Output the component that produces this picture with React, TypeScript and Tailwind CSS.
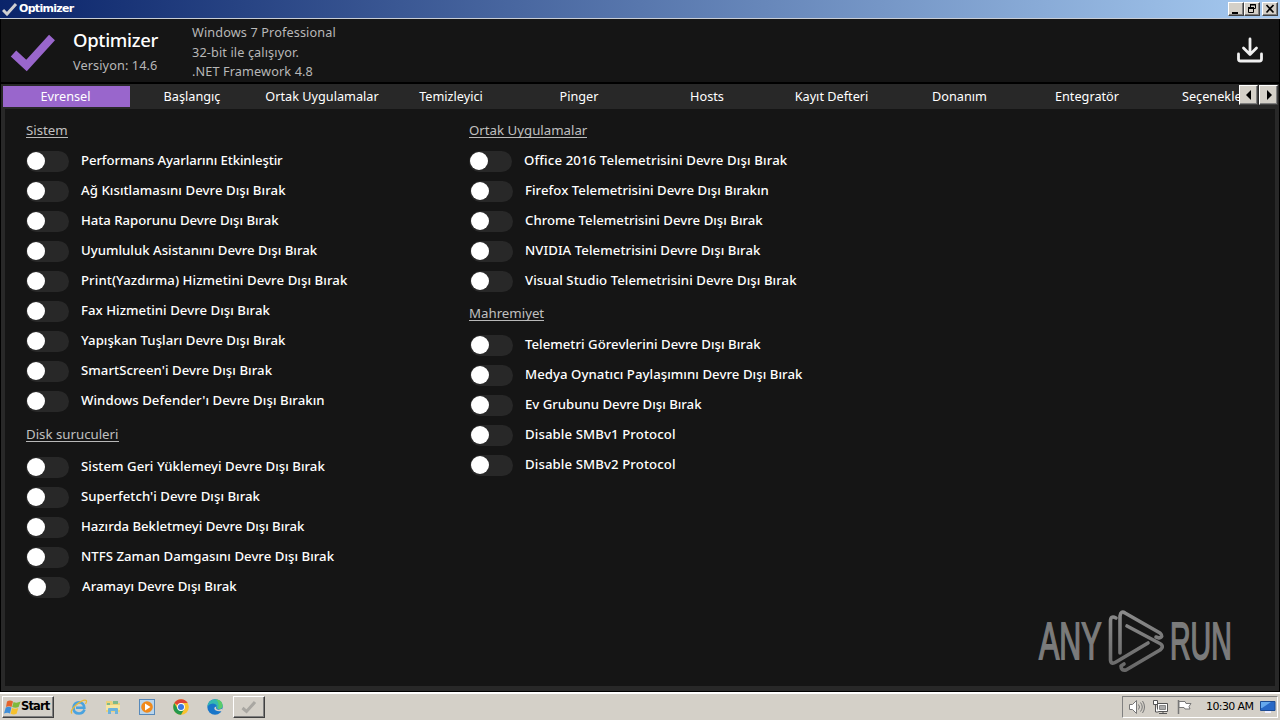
import { useId } from "react";

type Item = { label: string; track?: string; shift?: string };

const system: Item[] = [
  { label: "Performans Ayarlarını Etkinleştir", track: "tracking-[-0.11px]" },
  { label: "Ağ Kısıtlamasını Devre Dışı Bırak", track: "tracking-[0.055px]" },
  { label: "Hata Raporunu Devre Dışı Bırak", track: "tracking-[-0.03px]" },
  { label: "Uyumluluk Asistanını Devre Dışı Bırak", track: "tracking-[0.01px]" },
  { label: "Print(Yazdırma) Hizmetini Devre Dışı Bırak", track: "tracking-[0.075px]" },
  { label: "Fax Hizmetini Devre Dışı Bırak", track: "tracking-[0.03px]" },
  { label: "Yapışkan Tuşları Devre Dışı Bırak", track: "tracking-[0.025px]" },
  { label: "SmartScreen'i Devre Dışı Bırak", track: "tracking-[0.05px]" },
  { label: "Windows Defender'ı Devre Dışı Bırakın", track: "tracking-[0.06px]" },
];
const disk: Item[] = [
  { label: "Sistem Geri Yüklemeyi Devre Dışı Bırak", track: "tracking-[0.035px]" },
  { label: "Superfetch'i Devre Dışı Bırak", track: "tracking-[0.03px]" },
  { label: "Hazırda Bekletmeyi Devre Dışı Bırak", track: "tracking-[-0.03px]" },
  { label: "NTFS Zaman Damgasını Devre Dışı Bırak", track: "tracking-[0.03px]" },
  { label: "Aramayı Devre Dışı Bırak", track: "tracking-[0px]", shift: "ml-px" },
];
const apps: Item[] = [
  { label: "Office 2016 Telemetrisini Devre Dışı Bırak", track: "tracking-[0.12px]", shift: "-ml-px" },
  { label: "Firefox Telemetrisini Devre Dışı Bırakın", track: "tracking-[0.04px]" },
  { label: "Chrome Telemetrisini Devre Dışı Bırak", track: "tracking-[0.01px]" },
  { label: "NVIDIA Telemetrisini Devre Dışı Bırak", track: "tracking-[0.06px]" },
  { label: "Visual Studio Telemetrisini Devre Dışı Bırak", track: "tracking-[0.07px]" },
];
const privacy: Item[] = [
  { label: "Telemetri Görevlerini Devre Dışı Bırak", track: "tracking-[0.02px]" },
  { label: "Medya Oynatıcı Paylaşımını Devre Dışı Bırak", track: "tracking-[0.055px]" },
  { label: "Ev Grubunu Devre Dışı Bırak", track: "tracking-[-0.01px]" },
  { label: "Disable SMBv1 Protocol" },
  { label: "Disable SMBv2 Protocol" },
];
const tabs = [
  { name: "Evrensel", box: "w-[127px] bg-[#9966cc] pr-[2px]" },
  { name: "Başlangıç", box: "w-[124px]" },
  { name: "Ortak Uygulamalar", box: "w-[136px]" },
  { name: "Temizleyici", box: "w-[122px]" },
  { name: "Pinger", box: "w-[134px]" },
  { name: "Hosts", box: "w-[122px]" },
  { name: "Kayıt Defteri", box: "w-[127px]" },
  { name: "Donanım", box: "w-[129px]" },
  { name: "Entegratör", box: "w-[126px]" },
];

function Toggle({ label, track = "tracking-[0.1px]", shift = "ml-0" }: Item) {
  return (
    <div className={`flex h-[30px] items-center ${shift}`}>
      <span className="mt-[2px] flex h-[21px] w-[43px] shrink-0 items-center rounded-full bg-[#282828] pl-[1px]">
        <span className="h-[18px] w-[18px] rounded-full bg-white" />
      </span>
      <span className={`ml-[12px] text-[13.2px] leading-[20px] font-medium whitespace-nowrap text-white ${track}`}>{label}</span>
    </div>
  );
}

function Heading({ children }: { children: string }) {
  return <h2 className="h-[18px] self-start border-b border-[#b8b8b8] text-[13.25px] leading-[20px] whitespace-nowrap text-[#c0c0c0]">{children}</h2>;
}

const raised = "border border-t-white border-l-white border-r-[#404040] border-b-[#404040] bg-[#d4d0c8] shadow-[inset_-1px_-1px_0_#808080]";

function Watermark() {
  const id = useId();
  return (
    <svg width="196" height="64" viewBox="0 0 196 64" className="absolute top-[500px] left-[1032px]">
      <defs>
        <linearGradient id={id} x1="0" y1="0" x2="0" y2="64" gradientUnits="userSpaceOnUse">
          <stop offset="0" stopColor="#8c8c8c" />
          <stop offset="1" stopColor="#666" />
        </linearGradient>
      </defs>
      <g fill="#7b7b7b" stroke="#7b7b7b" strokeWidth="1.8" fontFamily="Liberation Sans, sans-serif">
        <text transform="translate(2 49.500) scale(.5 1)" fontSize="51.500" textLength="125" lengthAdjust="spacingAndGlyphs" x="0" y="0">ANY</text>
        <text transform="translate(133 49.500) scale(.49 1)" fontSize="51.500" textLength="126" lengthAdjust="spacingAndGlyphs" x="0" y="0">RUN</text>
      </g>
      <g fill="none" stroke={`url(#${id})`} strokeWidth="3.6" strokeLinejoin="round" strokeLinecap="round">
        <path d="M79 9 Q73.500 6 73.500 12 V51 Q74 56 79 53 L111 34" />
        <path d="M83 44 V7 Q84 1 88 4 L123 24 Q127 28 122 29 L119 28" />
        <path d="M90 17 L122 34 Q128 37 123 41 L89 61 Q84 62 84 57 L87 55" />
      </g>
    </svg>
  );
}

function StartLogo() {
  return (
    <svg width="17" height="17" viewBox="0 0 17 17" className="shrink-0">
      <path d="M3 2.500q3-2 6 0L7.500 8Q5 6.500 2 8z" fill="#e4632c" />
      <path d="M9.600 3q3 1.500 7-.5l-2 5.500q-3 1.500-6.500 0z" fill="#7fb93c" />
      <path d="M1.800 8.600q3-1.500 5.600 0L6 14.500q-2.500-1.500-6 0z" fill="#3f8ed8" />
      <path d="M8 9q3 1.500 6.300 0l-1.700 5.800q-3 1.500-6 0z" fill="#f6c12d" />
    </svg>
  );
}

function ExplorerIcon() {
  return (
    <svg width="18" height="18" viewBox="0 0 18 18" fill="none">
      <path d="M14.500 11.500Q13 15.500 9 15.500 3.500 15.500 3.500 9.500 4 4.500 9 4.200 14 4.500 14.300 9.800H6" stroke="#4aa3df" strokeWidth="2.600" />
      <path d="M2 15.500Q-.5 13 6 7 14 .5 16.300 2.500 17 3.500 15.500 6" stroke="#e8b93a" strokeWidth="1.300" />
    </svg>
  );
}

function FolderIcon() {
  return (
    <svg width="18" height="18" viewBox="0 0 18 18">
      <path d="M2 3h6l1 2h7v9H2z" fill="#ecd27a" />
      <path d="M3 5h3v2H3zM9 3h5v3H9z" fill="#7fb98a" />
      <path d="M2 7h14v5H2z" fill="#f7e6a3" />
      <path d="M4 16v-5q0-1 1-1h8q1 0 1 1v5h-3v-3H7v3z" fill="#6db3dc" />
    </svg>
  );
}

function PlayerIcon() {
  return (
    <svg width="18" height="18" viewBox="0 0 18 18">
      <rect x="1.500" y="1.500" width="15" height="15" fill="#b9d5ec" stroke="#5789ba" />
      <circle cx="9" cy="9" r="5.800" fill="#f08a1c" />
      <path d="M7 5.500v7L12.500 9z" fill="#fff" />
    </svg>
  );
}

function ChromeIcon() {
  return (
    <svg width="18" height="18" viewBox="0 0 18 18">
      <circle cx="9" cy="9" r="7.800" fill="#f9c22e" />
      <path d="M9 9L2.250 5.100A7.800 7.800 0 0 1 15.750 5.100H9z" fill="#dd4437" />
      <path d="M9 9L5.750 10.900 2.250 5.100A7.800 7.800 0 0 0 9 16.800L12.250 10.900z" fill="#25984d" />
      <circle cx="9" cy="9" r="3.900" fill="#fff" />
      <circle cx="9" cy="9" r="3" fill="#3b78e0" />
    </svg>
  );
}

function EdgeIcon() {
  return (
    <svg width="18" height="18" viewBox="0 0 18 18">
      <circle cx="9" cy="9" r="7.700" fill="#1976c9" />
      <path d="M1.300 8.500Q2.500 1.300 9.500 1.300 16.500 2 16.700 8 16 11.500 12 11 10 10.500 10.800 9 11.200 6 7 5.500 3.500 5.500 1.300 8.500z" fill="#35b9b0" />
      <path d="M10 1.300Q16.500 2 16.700 8 16 11.500 12 11 14 6 10 1.300z" fill="#5acb6b" />
      <path d="M10.500 8.500Q9.500 9.500 10.500 11 12.500 12.500 16.700 10.500L16 13Q12 14 9 12 7 9 10.500 8.500z" fill="#d4d0c8" />
    </svg>
  );
}

export default function App() {
  return (
    <div className="flex h-[720px] w-[1280px] flex-col overflow-hidden bg-black font-['Noto_Sans',sans-serif]">
      <header className="flex h-[19px] shrink-0 items-center border-b border-[#c8cdd5] bg-[linear-gradient(90deg,#0a246a,#a6caf0)] pr-[2px] pl-[2px]">
        <svg width="16" height="14" viewBox="0 0 16 14"><path d="M1 8 L5 12 L14 2" fill="none" stroke="#d0d0d0" strokeWidth="3" /></svg>
        <span className="ml-[1px] font-['DejaVu_Sans',sans-serif] text-[11px] font-bold tracking-[-0.7px] text-white">Optimizer</span>
        <div className="ml-auto flex">
          <span className={`h-[14px] w-[16px] ${raised}`}><svg width="14" height="12"><path d="M3 9h6v2H3z" /></svg></span>
          <span className={`h-[14px] w-[16px] ${raised}`}><svg width="14" height="12" fill="none" stroke="#000"><path d="M5.500 1.500h5v4h-2M5 2h6M3 4.500h6M3.500 4.500h5v5h-5zM3 5.500h6M5.500 4V1" /></svg></span>
          <span className={`ml-[2px] h-[14px] w-[16px] ${raised}`}><svg width="14" height="12" stroke="#000" strokeWidth="1.700"><path d="M3.500 2l7 7.500M10.500 2l-7 7.500" /></svg></span>
        </div>
      </header>

      <section className="flex h-[63px] shrink-0 border-x border-black bg-[#151515]">
        <svg width="54" height="63" viewBox="0 0 54 63" className="shrink-0"><path d="M12.500 34.500 L25.500 46.500 L51 18.500" fill="none" stroke="#9966cc" strokeWidth="8" /></svg>
        <div className="ml-[18px] w-[119px]">
          <h1 className="mt-[8px] text-[18.500px] leading-[26px] font-medium tracking-[-0.3px] whitespace-nowrap text-white">Optimizer</h1>
          <p className="mt-[2px] text-[12.700px] leading-[20px] tracking-[0.1px] whitespace-nowrap text-[#b8b8b8]">Versiyon: 14.6</p>
        </div>
        <div className="mt-[4px] text-[12.700px] leading-[19.500px] tracking-[0.12px] whitespace-nowrap text-[#b8b8b8]">
          <p>Windows 7 Professional</p>
          <p>32-bit ile çalışıyor.</p>
          <p>.NET Framework 4.8</p>
        </div>
        <svg width="28" height="28" viewBox="0 0 28 28" className="mt-[17px] mr-[15px] ml-auto" fill="none" stroke="#f0f0f0" strokeWidth="2.800" strokeLinecap="round" strokeLinejoin="round">
          <path d="M14 3V18M7.500 12l6.500 6.500 6.500-6.500M2.500 18v5q0 2 2 2h19q2 0 2-2v-5" />
        </svg>
      </section>

      <nav className="mx-px mt-[2px] flex h-[25px] shrink-0 overflow-hidden bg-[#282828] pt-[2px] pl-[2px] text-[12.700px] leading-[21px] text-white">
        {tabs.map((t) => (
          <span key={t.name} className={`h-[21px] shrink-0 text-center whitespace-nowrap ${t.box}`}>{t.name}</span>
        ))}
        <span className="w-[89px] shrink-0 overflow-hidden pl-[32px] whitespace-nowrap">Seçenekler</span>
        <span className={`-mt-px flex h-[20px] w-[19px] shrink-0 items-center justify-center ${raised}`}><svg width="6" height="10"><path d="M5 0v10L0 5z" /></svg></span>
        <span className={`-mt-px ml-[1px] flex h-[20px] w-[19px] shrink-0 items-center justify-center ${raised}`}><svg width="6" height="10"><path d="M1 0v10l5-5z" /></svg></span>
      </nav>

      <main className="relative mx-px flex h-[582px] shrink-0 border-x-[4px] border-b-[5px] border-[#282828] bg-[#151515]">
        <div className="ml-[21px] flex w-[443px] flex-col pt-[11px]">
          <Heading>Sistem</Heading>
          <div className="mt-[7px]">{system.map((x) => <Toggle key={x.label} {...x} />)}</div>
          <div className="mt-[9px] flex flex-col"><Heading>Disk suruculeri</Heading></div>
          <div className="mt-[9px]">{disk.map((x) => <Toggle key={x.label} {...x} />)}</div>
        </div>
        <div className="flex flex-col pt-[11px]">
          <Heading>Ortak Uygulamalar</Heading>
          <div className="mt-[7px] ml-[1px]">{apps.map((x) => <Toggle key={x.label} {...x} />)}</div>
          <div className="mt-[8px] flex flex-col"><Heading>Mahremiyet</Heading></div>
          <div className="mt-[8px] ml-[1px]">{privacy.map((x) => <Toggle key={x.label} {...x} />)}</div>
        </div>
        <Watermark />
      </main>

      <footer className="mt-auto flex h-[28px] shrink-0 items-center border-t-2 border-white bg-[#d4d0c8] pr-[2px] pl-[2px] font-['DejaVu_Sans',sans-serif] text-black">
        <div className={`flex h-[22px] w-[52px] items-center pl-px ${raised}`}>
          <StartLogo />
          <span className="text-[11.5px] font-bold tracking-[-0.85px]">Start</span>
        </div>
        <div className="ml-[16px] flex gap-[16px]">
          <ExplorerIcon />
          <FolderIcon />
          <PlayerIcon />
          <ChromeIcon />
          <EdgeIcon />
        </div>
        <div className={`ml-[9px] flex h-[22px] w-[32px] items-center justify-center ${raised}`}>
          <svg width="16" height="14" viewBox="0 0 16 14"><path d="M1.500 8 L5.500 11.500 L14 2" fill="none" stroke="#a9a7a2" strokeWidth="3" /></svg>
        </div>
        <div className="ml-auto flex h-[22px] w-[156px] items-center border border-t-[#808080] border-r-white border-b-white border-l-[#808080] pl-[5px]">
          <svg width="18" height="16" viewBox="0 0 18 16" fill="#fff" stroke="#777"><path d="M1.500 5.500h3l4-4v13l-4-4h-3z" /><path d="M10.500 5.500q2 2.500 0 5M12.500 3.500q3.500 4.500 0 9M14.500 2q4 6 0 12" fill="none" /></svg>
          <svg width="17" height="16" viewBox="0 0 17 16" className="ml-[6px]" stroke="#555"><path d="M5.500 4.500h10v8h-10z" fill="#fff" /><path d="M7.500 6.500h6v4h-6z" fill="#aaa" stroke="#888" /><path d="M7 14.500h8M11 12v2" /><path d="M1.500 1.500h4v4h-4zM3.500 6v7h3" fill="#fff" /></svg>
          <svg width="17" height="16" viewBox="0 0 17 16" className="ml-[7px]" stroke="#777"><path d="M2.500 1v14" strokeWidth="1.500" /><path d="M3 2.500h6l1 2h5l-2 3 1 2.500H9l-1-1.500H3z" fill="#fff" /></svg>
          <span className="ml-[13px] text-[11px] tracking-[-0.6px] whitespace-nowrap">10:30 AM</span>
          <svg width="16" height="16" viewBox="0 0 16 16" className="mr-px ml-auto"><path d="M.5 2.500h14.500v9H.5z" fill="#2868c6" stroke="#1d4c94" /><path d="M1 3h10L2 9H1z" fill="#65a8ed" /><path d="M5 12h6v2H5z" fill="#eef" /></svg>
        </div>
      </footer>
    </div>
  );
}
